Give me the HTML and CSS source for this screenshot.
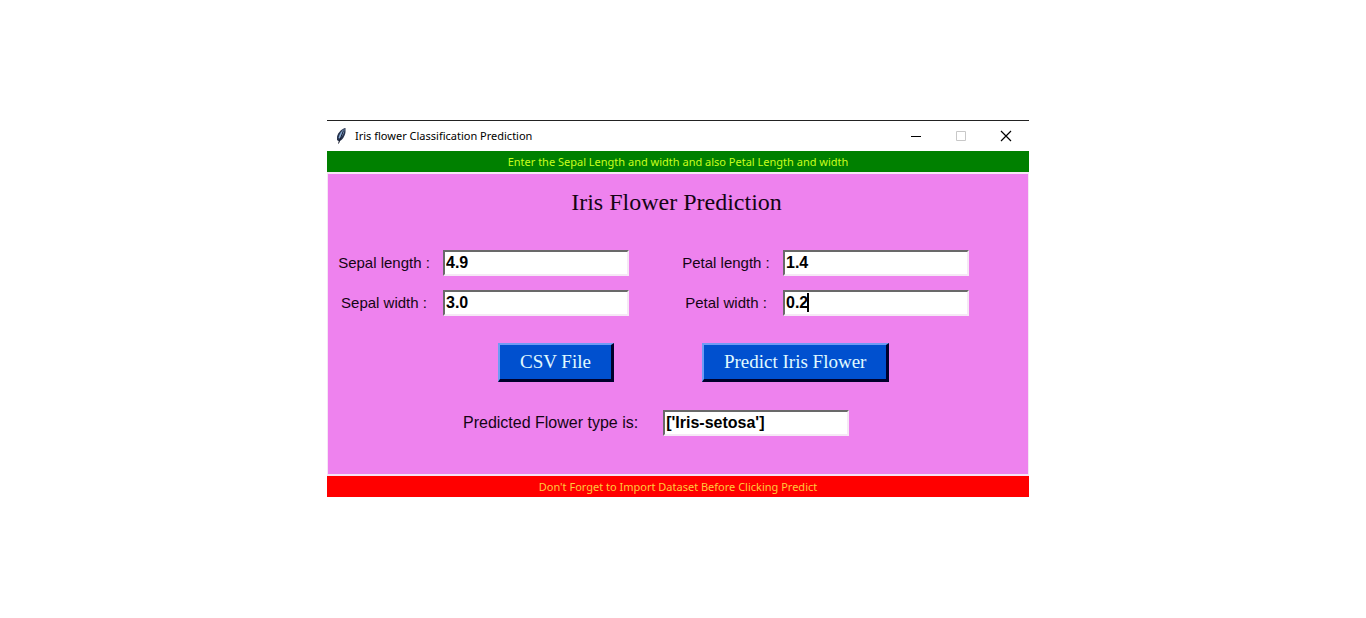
FILE: index.html
```html
<!DOCTYPE html>
<html lang="en">
<head>
<meta charset="utf-8">
<title>Iris flower Classification Prediction</title>
<link rel="stylesheet" href="styles.css">
</head>
<body>
<main class="window">
  <header class="titlebar">
    <svg class="feather" width="16" height="18" viewBox="0 0 16 18" aria-hidden="true">
      <path d="M11.500 1C8 1.500 4.500 5 3 9.500L3 13L5 14.500C8.500 13 11 9 11.500 5Z" fill="#26324c"/>
      <path d="M10.500 2C7.500 3.500 5.500 7 4.500 11L6 11.500C8.500 9 10.500 6 10.500 2Z" fill="#86a9d2"/>
      <path d="M9.500 3.500L4.500 16.500" stroke="#15192a" stroke-width="1" fill="none"/>
    </svg>
    <span class="caption">Iris flower Classification Prediction</span>
    <div class="controls">
      <button type="button" class="control" aria-label="Minimize">
        <svg width="12" height="12" viewBox="0 0 12 12"><path d="M1 6.500H11" stroke="#000"/></svg>
      </button>
      <button type="button" class="control" aria-label="Maximize" disabled>
        <svg width="12" height="12" viewBox="0 0 12 12"><path d="M1.500 1.500H10.500V10.500H1.500Z" stroke="#c8c8c8" fill="none"/></svg>
      </button>
      <button type="button" class="control" aria-label="Close">
        <svg width="12" height="12" viewBox="0 0 12 12"><path d="M1 1L11 11M11 1L1 11" stroke="#000" stroke-width="1.200"/></svg>
      </button>
    </div>
  </header>
  <p class="strip strip-top">Enter the Sepal Length and width and also Petal Length and width</p>
  <form class="panel">
    <h1 class="heading">Iris Flower Prediction</h1>
    <div class="measurements">
      <label class="label" for="sepal-length">Sepal length :</label>
      <input class="entry" id="sepal-length" type="text" value="4.9">
      <label class="label label-petal" for="petal-length">Petal length :</label>
      <input class="entry" id="petal-length" type="text" value="1.4">
      <label class="label" for="sepal-width">Sepal width :</label>
      <input class="entry" id="sepal-width" type="text" value="3.0">
      <label class="label label-petal" for="petal-width">Petal width :</label>
      <div class="active-field">
        <input class="entry" id="petal-width" type="text" value="0.2">
        <span class="caret"></span>
      </div>
    </div>
    <div class="actions">
      <button type="button" class="action">CSV File</button>
      <button type="button" class="action">Predict Iris Flower</button>
    </div>
    <div class="result">
      <label class="label label-result" for="prediction">Predicted Flower type is:</label>
      <input class="entry" id="prediction" type="text" value="['Iris-setosa']">
    </div>
  </form>
  <p class="strip strip-bottom">Don't Forget to Import Dataset Before Clicking Predict</p>
</main>
</body>
</html>
```
FILE: styles.css
```css
* {
  box-sizing: border-box;
}

body {
  margin: 0;
  min-height: 100vh;
  padding: 0 10px 1px 0;
  display: flex;
  align-items: center;
  justify-content: center;
  background: #fff;
  color: #000;
}

.window {
  width: 100%;
  max-width: 702px;
  border-top: 1px solid #222;
}

.titlebar {
  display: flex;
  align-items: center;
  height: 30px;
  padding: 0 1px 1px 7px;
  font: 11px/16px "Noto Sans", "Open Sans", sans-serif;
}

.feather {
  margin-right: 5px;
}

.controls {
  display: flex;
  margin-left: auto;
  height: 100%;
}

.control {
  display: flex;
  align-items: center;
  justify-content: center;
  width: 45px;
  padding: 0;
  border: 0;
  background: none;
}

.strip {
  margin: 0;
  font: 11px/21px "Noto Sans", "Open Sans", sans-serif;
  text-align: center;
}

.strip-top {
  background: #008000;
  color: #c8ff1e;
}

.strip-bottom {
  background: #f00;
  color: #ffc83c;
}

.panel {
  border: solid #f6e6f6;
  border-width: 2px 1px;
  padding: 12px 0 38px;
  background: #ee82ee;
}

.heading {
  margin: 0 3px 32px 0;
  color: #140514;
  font: 24px/32px "Liberation Serif", "Times New Roman", serif;
  text-align: center;
}

.measurements {
  display: grid;
  grid-template-columns: 94px 186px 130px 186px;
  gap: 14px 12px;
  padding-left: 9px;
}

.label {
  align-self: center;
  color: #140514;
  font: 15px/24px "Liberation Sans", Arial, sans-serif;
  text-align: center;
  white-space: nowrap;
}

.label-petal {
  padding-left: 40px;
}

.label-result {
  font-size: 16px;
}

.entry {
  display: block;
  width: 186px;
  height: 26px;
  padding: 0 1px;
  border: 2px solid;
  border-color: #696969 #f5e8f5 #f5e8f5 #696969;
  border-radius: 0;
  background: #fff;
  color: #000;
  font: bold 16px/20px "Liberation Sans", Arial, sans-serif;
}

.active-field {
  position: relative;
}

.caret {
  position: absolute;
  left: 24px;
  top: 3px;
  width: 2px;
  height: 19px;
  background: #000;
}

.actions {
  display: flex;
  gap: 88px;
  padding: 27px 0 28px 170px;
}

.action {
  height: 39px;
  padding: 0 20px;
  border: solid;
  border-width: 2px 3px 3px 2px;
  border-color: #6e9cf5 #00002c #00002c #6e9cf5;
  background: #0050cf;
  color: #e0faff;
  font: 19px/28px "Liberation Serif", "Times New Roman", serif;
}

.result {
  display: flex;
  gap: 25px;
  padding-left: 135px;
}
```
